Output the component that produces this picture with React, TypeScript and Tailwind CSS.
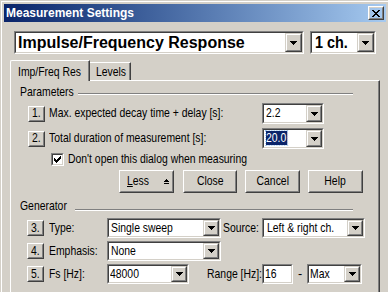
import type { ReactNode } from 'react';

// narrow UI text: no condensed face installed, so squeeze Liberation Sans
function T({ children, align = 'left' }: { children: ReactNode; align?: 'left' | 'center' | 'right' }) {
  const origin = align === 'center' ? 'origin-center' : align === 'right' ? 'origin-right' : 'origin-left';
  return <span className={`inline-block whitespace-nowrap ${origin} scale-x-82`}>{children}</span>;
}

function Raised({ className = '', children }: { className?: string; children?: ReactNode }) {
  return (
    <div className={`flex-none border border-t-white border-l-white border-r-[#404040] border-b-[#404040] ${className}`}>
      <div className="flex h-full w-full items-center justify-center border border-t-[#d4d0c8] border-l-[#d4d0c8] border-r-[#808080] border-b-[#808080]">
        {children}
      </div>
    </div>
  );
}

function Sunken({ className = '', children }: { className?: string; children?: ReactNode }) {
  return (
    <div className={`flex-none border border-t-[#808080] border-l-[#808080] border-r-white border-b-white ${className}`}>
      <div className="flex h-full w-full border border-t-[#404040] border-l-[#404040] border-r-[#d4d0c8] border-b-[#d4d0c8] bg-white">
        {children}
      </div>
    </div>
  );
}

function DropButton({ wide = false }: { wide?: boolean }) {
  return (
    <div
      className={`flex h-full flex-none items-center justify-center border border-t-[#d4d0c8] border-l-[#d4d0c8] border-r-[#404040] border-b-[#404040] ${
        wide ? 'w-[17px]' : 'w-[16px]'
      }`}
    >
      <div className="flex h-full w-full items-center justify-center border border-t-white border-l-white border-r-[#808080] border-b-[#808080] bg-[#d4d0c8]">
        <svg width="7" height="4" viewBox="0 0 7 4" shapeRendering="crispEdges">
          <path d="M0 0h7v1H0z M1 1h5v1H1z M2 2h3v1H2z M3 3h1v1H3z" fill="#000" />
        </svg>
      </div>
    </div>
  );
}

function Combo({ className, pad = 'pl-[2px]', children }: { className: string; pad?: string; children: ReactNode }) {
  return (
    <Sunken className={className}>
      <div className={`flex min-w-0 flex-1 items-center overflow-hidden ${pad}`}>
        <T>{children}</T>
      </div>
      <DropButton />
    </Sunken>
  );
}

function NumBtn({ n }: { n: string }) {
  return (
    <Raised className="h-[16px] w-[17px]">
      <T align="center">{n}</T>
    </Raised>
  );
}

function PushBtn({ className, children }: { className: string; children: ReactNode }) {
  return <Raised className={`h-[23px] ${className}`}>{children}</Raised>;
}

function GroupHead({ label, labelW, lineW, lineTop }: { label: string; labelW: string; lineW: string; lineTop: string }) {
  return (
    <div className="ml-[9px] flex items-start">
      <span className={labelW}>
        <T>{label}</T>
      </span>
      <div className={`h-[2px] border-t border-b border-t-[#808080] border-b-white ${lineW} ${lineTop}`} />
    </div>
  );
}

export default function App() {
  return (
    <div className="h-[292px] w-[388px] overflow-hidden bg-[#d4d0c8] font-['Liberation_Sans',sans-serif] text-[12.7px] leading-[15px] text-black">
      <div className="w-[390px] border-t border-l border-r border-t-[#d4d0c8] border-l-[#d4d0c8] border-r-[#404040]">
        <div className="border-t border-l border-r border-t-white border-l-white border-r-[#808080] p-[2px] pb-[20px]">
          {/* Title bar */}
          <div className="flex h-[18px] items-center justify-between bg-linear-to-r from-[#0a246a] to-[#a6caf0] pl-[2px] pr-[2px]">
            <span className="text-[12px] font-bold text-white">Measurement Settings</span>
            <Raised className="h-[14px] w-[16px]">
              <svg width="8" height="7" viewBox="0 0 8 7" shapeRendering="crispEdges">
                <path
                  d="M0 0h2v1H0z M6 0h2v1H6z M1 1h2v1H1z M5 1h2v1H5z M2 2h4v1H2z M3 3h2v1H3z M2 4h4v1H2z M1 5h2v1H1z M5 5h2v1H5z M0 6h2v1H0z M6 6h2v1H6z"
                  fill="#000"
                />
              </svg>
            </Raised>
          </div>

          {/* Measurement type */}
          <div className="ml-[10px] mt-[9px] flex gap-[6px] text-[16px] font-bold">
            <Sunken className="h-[23px] w-[290px]">
              <div className="flex flex-1 items-center pl-[2px]">Impulse/Frequency Response</div>
              <DropButton wide />
            </Sunken>
            <Sunken className="h-[23px] w-[66px]">
              <div className="flex flex-1 items-center pl-[3px]">
                <span className="inline-block origin-left scale-x-90">1 ch.</span>
              </div>
              <DropButton wide />
            </Sunken>
          </div>

          {/* Tabs */}
          <div className="ml-[6px] mt-[6px]">
            <div className="flex h-[20px] items-end">
              <div className="relative z-10 -mb-px h-[21px] w-[80px] rounded-tl-[2px] border-t border-l border-r border-t-white border-l-white border-r-[#404040] bg-[#d4d0c8]">
                <div className="h-full border-r border-r-[#808080] pl-[7px] pt-[4px]">
                  <T>Imp/Freq Res</T>
                </div>
              </div>
              <div className="h-[18px] w-[41px] border-t border-r border-t-white border-r-[#404040]">
                <div className="h-full border-r border-r-[#808080] pl-[6px] pt-[2px]">
                  <T>Levels</T>
                </div>
              </div>
            </div>

            <div className="h-[230px] w-[370px] border-t border-l border-r border-t-white border-l-white border-r-[#404040]">
              <div className="flex h-full flex-col border-r border-r-[#808080] pt-[4px]">
                <GroupHead label="Parameters" labelW="w-[58px]" lineW="w-[275px]" lineTop="mt-[8px]" />

                <div className="mt-[3px] flex h-[21px] items-center pl-[17px]">
                  <NumBtn n="1." />
                  <span className="ml-[4px] w-[213px]">
                    <T>Max. expected decay time + delay [s]:</T>
                  </span>
                  <Combo className="h-[21px] w-[62px]">2.2</Combo>
                </div>

                <div className="mt-[4px] flex h-[21px] items-center pl-[17px]">
                  <NumBtn n="2." />
                  <span className="ml-[4px] w-[213px]">
                    <T>Total duration of measurement [s]:</T>
                  </span>
                  <Combo className="h-[21px] w-[62px]">
                    <span className="bg-[#0a246a] pr-px text-white outline-1 outline-dotted outline-[#a6caf0]">20.0</span>
                  </Combo>
                </div>

                <div className="mt-[4px] flex h-[13px] items-center pl-[40px]">
                  <Sunken className="h-[13px] w-[13px]">
                    <div className="flex flex-1 items-center justify-center">
                      <svg width="7" height="7" viewBox="0 0 7 7" shapeRendering="crispEdges">
                        <path
                          d="M6 0h1v1H6z M5 1h2v1H5z M0 2h1v1H0z M4 2h3v1H4z M0 3h2v1H0z M3 3h3v1H3z M0 4h5v1H0z M1 5h3v1H1z M2 6h1v1H2z"
                          fill="#000"
                        />
                      </svg>
                    </div>
                  </Sunken>
                  <span className="ml-[4px]">
                    <T>Don't open this dialog when measuring</T>
                  </span>
                </div>

                <div className="mt-[4px] flex h-[23px] items-center pl-[108px]">
                  <PushBtn className="w-[55px]">
                    <span className="flex items-center gap-[10px] pl-[3px]">
                      <T>
                        <span className="underline underline-offset-1">L</span>ess
                      </T>
                      <svg width="5" height="5" viewBox="0 0 5 5" shapeRendering="crispEdges">
                        <path d="M2 0h1v1H2z M1 1h3v1H1z M0 2h5v1H0z M0 4h5v1H0z" fill="#000" />
                      </svg>
                    </span>
                  </PushBtn>
                  <PushBtn className="ml-[9px] w-[54px]">
                    <T align="center">Close</T>
                  </PushBtn>
                  <PushBtn className="ml-[8px] w-[55px]">
                    <T align="center">Cancel</T>
                  </PushBtn>
                  <PushBtn className="ml-[8px] w-[55px]">
                    <T align="center">Help</T>
                  </PushBtn>
                </div>

                <div className="mt-[6px]">
                  <GroupHead label="Generator" labelW="w-[55px]" lineW="w-[278px]" lineTop="mt-[10px]" />
                </div>

                <div className="mt-[4px] flex h-[20px] items-center pl-[16px]">
                  <NumBtn n="3." />
                  <span className="ml-[5px] w-[58px]">
                    <T>Type:</T>
                  </span>
                  <Combo className="h-[20px] w-[114px]">Single sweep</Combo>
                  <span className="ml-[2px] w-[39px]">
                    <T>Source:</T>
                  </span>
                  <Combo className="h-[20px] w-[103px]" pad="pl-[3px]">
                    Left &amp; right ch.
                  </Combo>
                </div>

                <div className="mt-[3px] flex h-[20px] items-center pl-[16px]">
                  <NumBtn n="4." />
                  <span className="ml-[5px] w-[58px]">
                    <T>Emphasis:</T>
                  </span>
                  <Combo className="h-[20px] w-[114px]">None</Combo>
                </div>

                <div className="mt-[3px] flex h-[20px] items-center pl-[16px]">
                  <NumBtn n="5." />
                  <span className="ml-[5px] w-[58px]">
                    <T>Fs [Hz]:</T>
                  </span>
                  <Combo className="h-[20px] w-[82px]" pad="pl-[1px]">
                    48000
                  </Combo>
                  <span className="w-[73px] text-right">
                    <T align="right">Range [Hz]:</T>
                  </span>
                  <Sunken className="h-[20px] w-[31px]">
                    <div className="flex flex-1 items-center pl-[1px]">
                      <T>16</T>
                    </div>
                  </Sunken>
                  <span className="w-[14px] text-center">-</span>
                  <Combo className="h-[20px] w-[55px]" pad="pl-[1px]">
                    Max
                  </Combo>
                </div>
              </div>
            </div>
          </div>
        </div>
      </div>
    </div>
  );
}
